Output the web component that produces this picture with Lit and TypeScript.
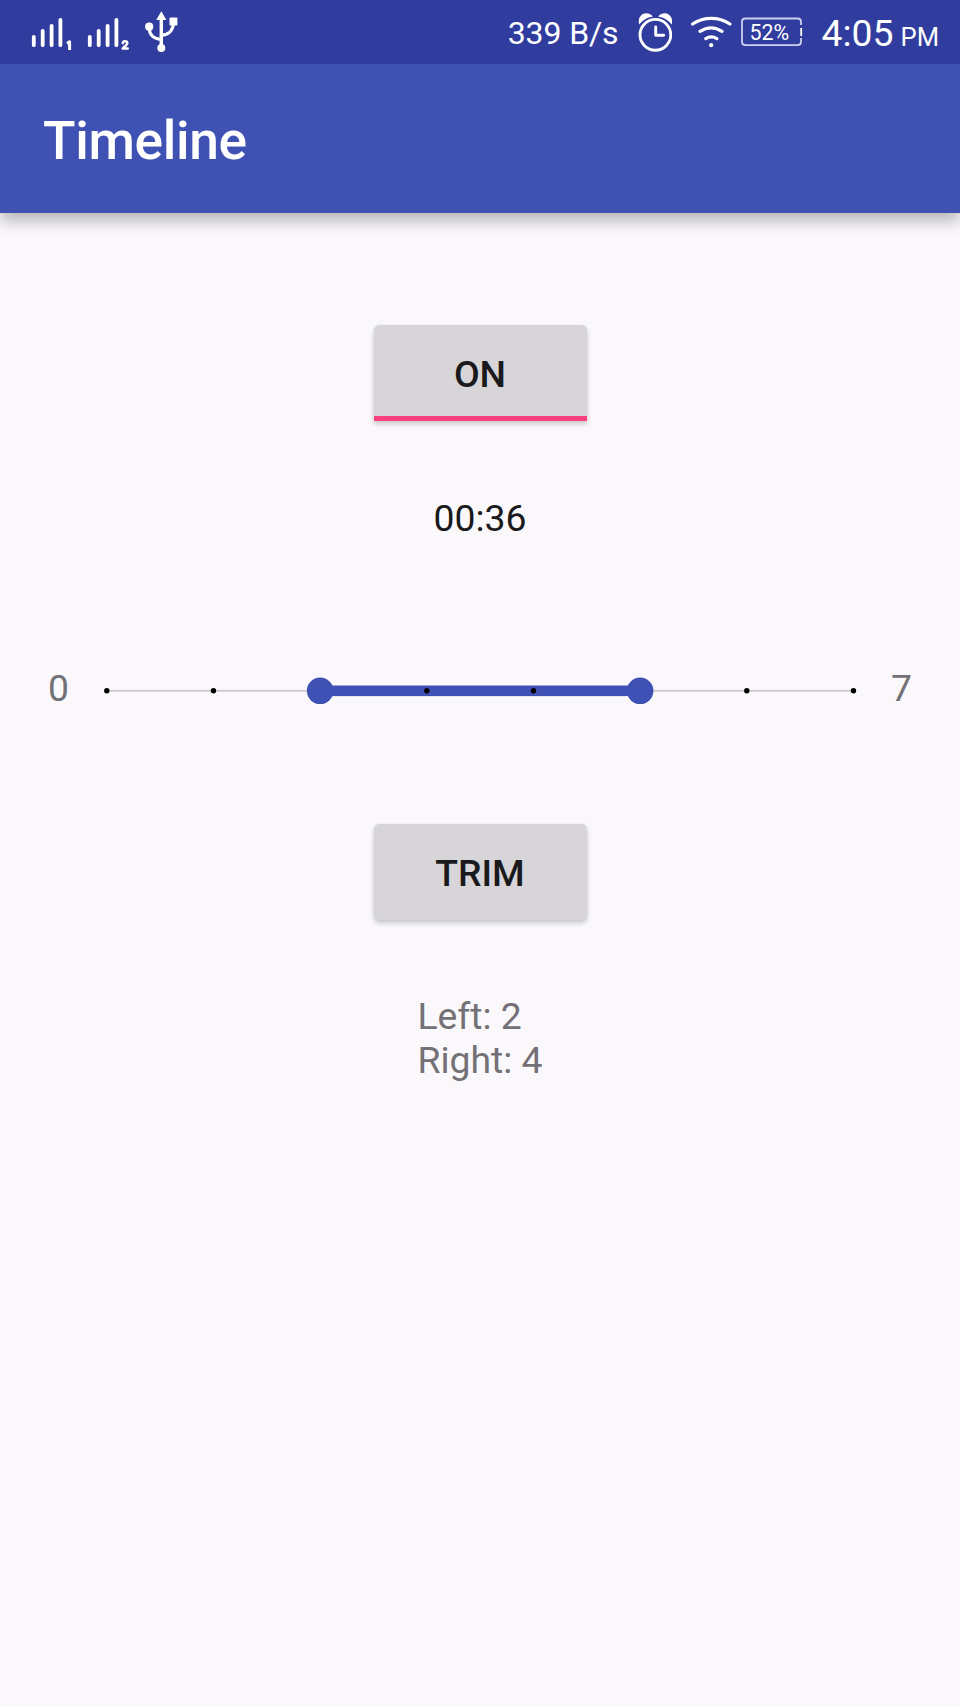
import { LitElement, html, css, svg } from "lit";
import { customElement, property } from "lit/decorators.js";

@customElement("status-bar")
class StatusBar extends LitElement {
  static styles = css`
    :host { display: flex; align-items: center; height: 64px; background: #303c9e; color: #fff; white-space: nowrap; position: relative; z-index: 1; }
    svg { display: block; flex: none; }
    .icons { flex: none; }
    .spacer { flex: 1; }
    .rate { font-size: 32px; line-height: 38px; padding-top: 2px; margin-right: 19px; letter-spacing: -0.1px; }
    .alarm { margin-right: 18px; }
    .wifi { margin-right: 8px; }
    .battery { box-sizing: border-box; width: 64px; display: grid; }
    .battery svg, .battery span { grid-area: 1 / 1; }
    .battery span { font-size: 21.4px; line-height: 28px; padding: 2px 0 0 10px; align-self: center; }
    .clock { font-size: 37.33px; line-height: 44px; padding-top: 5px; margin-left: 18px; }
    .clock small { font-size: 25.6px; margin-left: 7px; }
    .end { width: 21px; flex: none; }
  `;

  render() {
    return html`
      <svg class="icons" width="200" height="64" viewBox="0 0 200 64" fill="none" stroke="#fff" stroke-linecap="round">
        ${[0, 56].map((dx) => svg`
          <path stroke-width="3.8" d="M${33.8 + dx} 37v8.2M${42.7 + dx} 30.8v14.4M${51.6 + dx} 25.8v19.4M${60.4 + dx} 19.8v25.4"/>`)}
        <path stroke-width="3" stroke-linecap="butt" stroke-linejoin="round" d="M67 43.6l2.6-1.8v8.2"/>
        <path stroke-width="2.5" stroke-linejoin="round" d="M122.8 43.2c.2-2.5 4.4-2.6 4.5 0c.1 1.6-2.8 3.4-4.6 5.3h5"/>
        <path stroke-width="3.4" d="M161.3 18v30"/>
        <path stroke-width="3.2" d="M149.2 27.5c0 7 4.2 11.6 12 11.9M173.3 23c0 7-4.5 11.8-12 12.1"/>
        <g fill="#fff" stroke="none">
          <path d="M161.3 11.2L166.4 20H156.2Z"/>
          <circle cx="149.2" cy="26.7" r="4.1"/>
          <rect x="169.5" y="17.5" width="7.9" height="7.9" rx="1"/>
          <circle cx="161.3" cy="48" r="4"/>
        </g>
      </svg>
      <span class="spacer"></span>
      <span class="rate">339 B/s</span>
      <svg class="alarm" width="34" height="64" viewBox="638 0 34 64" fill="none" stroke="#fff">
        <circle cx="655.4" cy="34.8" r="15.4" stroke-width="2.9"/>
        <path stroke-width="2.9" stroke-linecap="round" stroke-linejoin="round" d="M655.7 27v8.2h8"/>
        <path fill="#fff" stroke="none" d="M639.2 24.6C636.6 14.5 646.5 9.5 653 16.4C647 17.4 643 20 639.2 24.6ZM671.8 24.6C674.2 14.5 664.4 9.5 658 16.4C664 17.4 668 20 671.8 24.6Z"/>
      </svg>
      <svg class="wifi" width="42" height="64" viewBox="690 0 42 64" fill="none" stroke="#fff" stroke-width="3.2" stroke-linecap="round">
        <path d="M692.6 24C704 16.4 718.5 16.4 729.9 24M700 31.4C707 26.8 715 26.8 722 31.4M705.8 38.6C709 36.6 713.5 36.6 716.8 38.6"/>
        <circle cx="711.2" cy="45.2" r="2.1" fill="#fff" stroke="none"/>
      </svg>
      <span class="battery">
        <svg width="64" height="64" viewBox="740 0 64 64" fill="none" stroke="#cdd0ee" stroke-width="1.8">
          <path d="M801 25v-3.2q0-3.3-3.3-3.3H745.3q-3.3 0-3.3 3.3V41.8q0 3.3 3.3 3.3H797.7q3.3 0 3.3-3.3V38"/>
          <path stroke="#fff" d="M801.2 28v8"/>
        </svg>
        <span>52%</span>
      </span>
      <span class="clock">4:05<small>PM</small></span>
      <span class="end"></span>
    `;
  }
}

@customElement("range-track")
class RangeTrack extends LitElement {
  static styles = css`
    :host, svg { display: block; }
  `;
  @property({ type: Number }) max = 7;
  @property({ type: Number }) left = 2;
  @property({ type: Number }) right = 5;

  render() {
    const x = (i: number) => 15.8 + (i * 746.67) / this.max;
    return html`
      <svg width="779" height="32" viewBox="0 0 779 32">
        <rect x="15.8" y="14.9" width="746.7" height="1.8" fill="#cbc9cd"/>
        <rect x=${x(this.left)} y="10.5" width=${x(this.right) - x(this.left)} height="10.6" fill="#3f51b5"/>
        ${Array.from({ length: this.max + 1 }, (_, i) => svg`<circle cx=${x(i)} cy="15.8" r="2.7" fill="#000"/>`)}
        <circle cx=${x(this.left)} cy="15.8" r="13.3" fill="#3f51b5"/>
        <circle cx=${x(this.right)} cy="15.8" r="13.3" fill="#3f51b5"/>
      </svg>`;
  }
}

@customElement("app-root")
class AppRoot extends LitElement {
  static styles = css`
    :host { display: flex; flex-direction: column; height: 1707px; overflow: hidden; background: #faf8fb; font-family: Roboto, sans-serif; font-size: 37.33px; line-height: 44px; }
    .bar { box-sizing: border-box; height: 149.3px; flex: none; padding: 46px 0 0 43px; background: #3f51b3; color: #fff; font-size: 53.33px; line-height: 62.5px; font-weight: 500; letter-spacing: -0.35px; box-shadow: 0 9px 15px rgba(0,0,0,.19), 0 3px 16px rgba(0,0,0,.12); }
    .body { display: flex; flex-direction: column; align-items: center; padding-top: 112px; color: #1a191c; }
    button { box-sizing: border-box; display: block; flex: none; width: 213px; height: 96px; border: 0; border-radius: 5.3px; padding: 0; background: #d7d5d8; color: #1a191c; font: 500 37.33px/44px Roboto, sans-serif; box-shadow: 0 3px 5px rgba(0,0,0,.2), 0 0 2px rgba(0,0,0,.06); }
    .toggle { border-bottom: 5.5px solid #fc407f; border-radius: 5.3px 5.3px 0 0; padding-top: 7px; }
    .time { margin-top: 75px; }
    .range { display: flex; align-items: flex-start; align-self: stretch; justify-content: space-between; margin-top: 126px; padding: 0 48px; color: #737175; }
    .range range-track { margin: 9.1px -23px 0; }
    .trim { margin-top: 114px; padding-top: 2px; }
    .result { margin-top: 74px; color: #737175; line-height: 44px; }
  `;

  render() {
    return html`
      <status-bar></status-bar>
      <header class="bar">Timeline</header>
      <main class="body">
        <button class="toggle">ON</button>
        <div class="time">00:36</div>
        <div class="range">
          <span>0</span>
          <range-track></range-track>
          <span>7</span>
        </div>
        <button class="trim">TRIM</button>
        <div class="result">Left: 2<br />Right: 4</div>
      </main>
    `;
  }
}
